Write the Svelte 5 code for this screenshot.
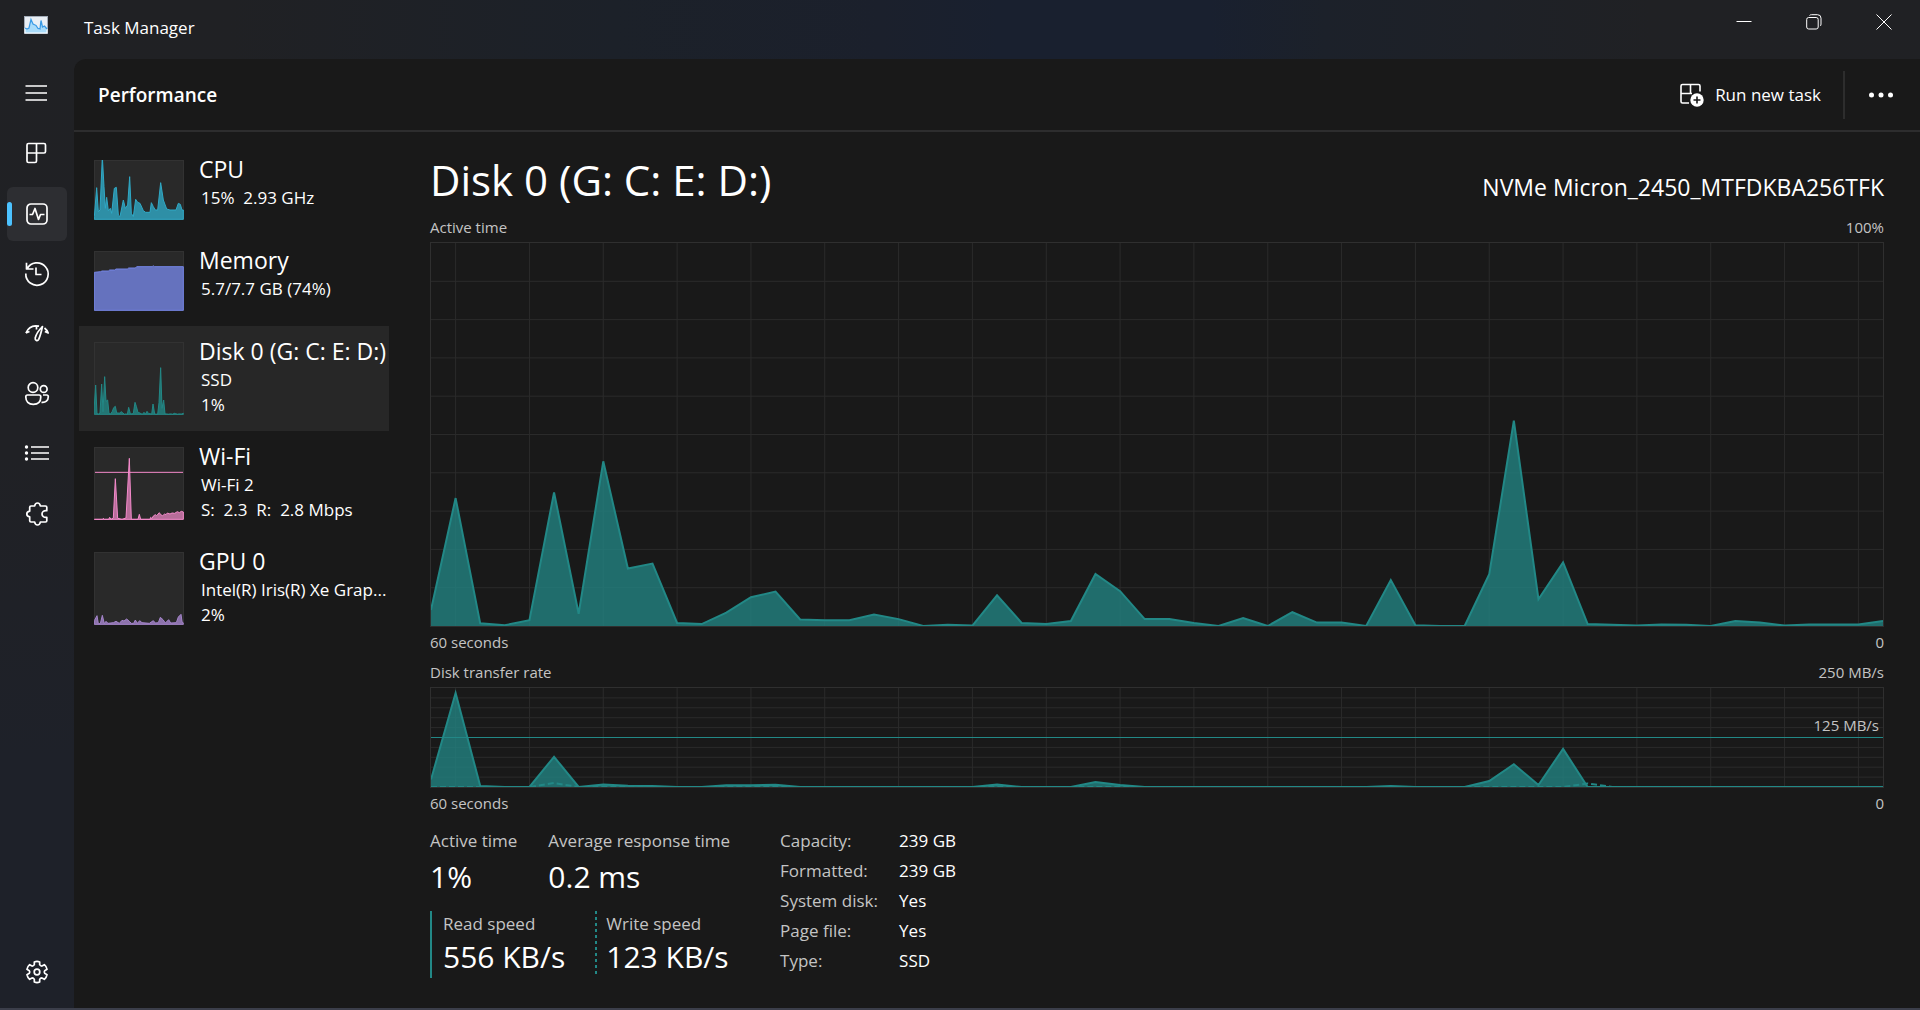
<script>
  const active = [
    4.2, 33.4, 0.7, 0.2, 1.5, 34.9, 3.2, 43, 15, 16.3, 0.8, 0.5, 3.5, 7.5, 9, 1.7, 1.5, 1.5, 3, 1.8,
    0, 0.3, 0.1, 8, 0.8, 0.5, 1.3, 13.6, 9.1, 1.8, 1.8, 0.8, 0, 2.1, 0, 3.6, 0.9, 0.9, 0, 12,
    0.2, 0, 0, 13.5, 53.6, 7, 16.6, 0.5, 0.3, 0.1, 0.4, 0.3, 0, 1.3, 0.9, 0.1, 0.4, 0.4, 0.4, 1.3
  ];

  const flat = (peaks) => Array.from({ length: 60 }, (_, i) => peaks[i] ?? 0);
  const read = flat({
    0: 7.5, 1: 95, 2: 1, 5: 30.5, 7: 2.5, 8: 1.3, 9: 1, 12: 1.7, 13: 1.7, 14: 2.3,
    23: 2.5, 27: 5, 28: 2, 39: 1, 43: 6, 44: 23, 45: 2, 46: 38.5
  });
  const write = flat({ 5: 4, 47: 3.5 });

  const line = (data) => data.map((v, i) => `${i},${100 - v}`).join(' ');
  const area = (data) => `0,100 ${line(data)} 59,100`;

  const columns = Array.from({ length: 20 }, (_, i) => 1 + i * 3);
  const rows = Array.from({ length: 9 }, (_, i) => (i + 1) * 10);

  const diskThumb = active.map((v, i) => `${Math.round((i * 268) / 59)},${Math.round(217 - v * 2.62)}`).join(' ');

  const resources = [
    {
      name: 'CPU', lines: ['15%  2.93 GHz'], kind: 'cpu', height: 180,
      points: '1,170 8,83 13,155 18,150 25,-10 30,80 34,145 38,112 43,152 49,145 53,160 61,85 67,82 73,165 78,170 88,120 94,145 101,135 107,50 112,160 118,170 125,118 131,127 138,130 148,152 155,157 168,157 172,128 178,140 184,150 191,150 200,68 208,120 218,147 228,150 246,150 253,130 259,133 264,150 268,150'
    },
    {
      name: 'Memory', lines: ['5.7/7.7 GB (74%)'], kind: 'memory', height: 180,
      points: '1,64 20,62 24,60 43,60 47,57 62,57 66,54 100,54 104,51 124,51 128,47 175,47 178,44 181,47 268,47'
    },
    { name: 'Disk 0 (G: C: E: D:)', lines: ['SSD', '1%'], kind: 'disk', height: 219, points: diskThumb, selected: true },
    {
      name: 'Wi-Fi', lines: ['Wi-Fi 2', 'S:  2.3  R:  2.8 Mbps'], kind: 'wifi', height: 219, limit: 76,
      points: '1,217 26,217 28,214 31,217 44,217 47,211 51,217 58,213 64,95 71,214 84,217 96,213 106,34 112,217 132,217 136,202 140,217 168,217 170,211 174,215 178,207 184,203 188,206 196,197 200,203 206,206 212,201 216,203 220,198 228,201 234,198 242,199 250,194 256,197 262,193 268,195'
    },
    {
      name: 'GPU 0', lines: ['Intel(R) Iris(R) Xe Grap...', '2%'], kind: 'gpu', height: 219,
      points: '1,206 9,191 13,215 19,215 25,190 31,215 36,208 42,214 58,212 66,208 76,214 84,205 90,207 98,201 106,208 112,214 119,214 124,204 130,214 137,206 144,212 166,214 178,206 184,213 193,212 199,196 207,203 214,213 224,203 230,213 247,212 253,195 261,187 264,208 268,214'
    }
  ];

  const specs = [
    ['Capacity:', '239 GB'],
    ['Formatted:', '239 GB'],
    ['System disk:', 'Yes'],
    ['Page file:', 'Yes'],
    ['Type:', 'SSD']
  ];

  const polar = (r, deg) => {
    const a = (deg * Math.PI) / 180;
    return `${(12 + r * Math.cos(a)).toFixed(2)} ${(12 + r * Math.sin(a)).toFixed(2)}`;
  };
  const gear =
    [0, 1, 2, 3, 4, 5]
      .map((k) => {
        const a = k * 60 - 90;
        return `${k ? 'L' : 'M'}${polar(7.8, a - 20)}L${polar(10.4, a - 15)}Q${polar(11, a)} ${polar(10.4, a + 15)}L${polar(7.8, a + 20)}Q${polar(6.8, a + 30)} ${polar(7.8, a + 40)}`;
      })
      .join('') + 'Z';
</script>

{#snippet grid()}
  {#each columns as x}<line class="grid" x1={x} x2={x} y1="0" y2="100" />{/each}
  {#each rows as y}<line class="grid" x1="0" x2="59" y1={y} y2={y} />{/each}
{/snippet}

<div class="window">
  <header class="titlebar">
    <svg class="logo" viewBox="0 0 24 18" aria-hidden="true">
      <rect x="0.5" y="0.5" width="23" height="17" fill="#e9eff5" stroke="#a3adb9" />
      <path d="M1 12L3 13L5 12L7 3.5L9 8L12 9.5L14 12.5L16 13L17 4.500L18.500 11L20.500 10L23 13V17H1Z" fill="#a9dcfa" />
      <path d="M1 12L3 13L5 12L7 3.5L9 8L12 9.5L14 12.5L16 13L17 4.500L18.500 11L20.500 10L23 13" fill="none" stroke="#3a9be6" stroke-width="1.300" />
    </svg>
    <span class="app-name">Task Manager</span>
    <div class="controls">
      <button aria-label="Minimize"><svg viewBox="0 0 16 16"><path d="M0.500 7.500H15.500" /></svg></button>
      <button aria-label="Restore">
        <svg viewBox="0 0 16 16"><rect x="0.700" y="3.500" width="11.500" height="11.500" rx="2" /><path d="M3.500 1.500Q4.200 0.700 5.500 0.700H11.500Q15 0.700 15 4.200V10Q15 11.500 14.200 12" /></svg>
      </button>
      <button aria-label="Close"><svg viewBox="0 0 16 16"><path d="M0.500 0.500L15.500 15.500M15.500 0.500L0.500 15.500" /></svg></button>
    </div>
  </header>

  <nav class="rail" aria-label="Pages">
    <button aria-label="Open navigation"><svg viewBox="0 0 24 24"><path d="M0.500 4H22M0.500 11H22M0.500 18H22" /></svg></button>
    <button aria-label="Processes">
      <svg viewBox="0 0 24 24"><path d="M3.500 1.500H19Q20.500 1.500 20.500 3V9.500Q20.500 11 19 11H11.500V19Q11.500 20.500 10 20.500H3.500Q2 20.500 2 19V3Q2 1.500 3.500 1.500ZM11.500 1.500V11M2 11H11.500" /></svg>
    </button>
    <button aria-label="Performance" class="current" aria-current="page">
      <svg viewBox="0 0 24 24"><rect x="2" y="2" width="20" height="20" rx="4" /><path d="M4.500 12.500H7.500L10 6.500L13.500 17.500L15.500 12.500H19.500" /></svg>
    </button>
    <button aria-label="App history">
      <svg viewBox="0 0 24 24"><path d="M1.500 0.800V7H8.500M2 7A11.200 11.200 0 1 1 0.800 11.500M11 5.500V12.500H16.500" /></svg>
    </button>
    <button aria-label="Startup apps">
      <svg viewBox="0 0 24 24"><path d="M0.900 11C3.500 5 8 2.800 14 4.200M0.900 11L4.500 9.500M11.500 3.700V7.500M17.500 4.500C14 8 11 12.500 10.200 16C9.800 18.500 12.500 19.500 13.700 17.300C15.200 14 16.500 9 17.500 4.500ZM19.500 6Q22 8 23.200 11L19.800 9.500" /></svg>
    </button>
    <button aria-label="Users">
      <svg viewBox="0 0 24 24"><circle cx="8" cy="5.500" r="4.800" /><circle cx="18.700" cy="7" r="3.400" /><path d="M2.500 13H14Q15.800 13 15.800 15C15.800 19.500 13 22.300 8.300 22.300C3.500 22.300 0.800 19.500 0.800 15Q0.800 13 2.500 13ZM18 13H21.700Q23.300 13 23.300 14.800C23.300 18.500 20.500 21 16.500 20.300" /></svg>
    </button>
    <button aria-label="Details">
      <svg viewBox="0 0 24 24"><path d="M6 5H24M6 11H24M6 17H24" /><path class="dots" d="M1.500 5h.01M1.500 11h.01M1.500 17h.01" /></svg>
    </button>
    <button aria-label="Services">
      <svg viewBox="0 0 24 24"><path d="M6 4H9.700C10 1.800 10.800 1 12.500 1C14.200 1 15 1.800 15.300 4H20.500Q21.800 4 21.800 5.300V8.700C18.800 8.300 17 9.800 17 12C17 14.200 18.800 15.700 21.800 15.300V18.700Q21.800 20 20.500 20H15.300C15 22.200 14.200 23 12.500 23C10.800 23 10 22.200 9.700 20H6Q4.700 20 4.700 18.700V14.800C2.700 14.500 1.800 13.500 1.800 12C1.800 10.500 2.700 9.500 4.700 9.200V5.300Q4.700 4 6 4Z" /></svg>
    </button>
    <button aria-label="Settings" class="settings">
      <svg viewBox="0 0 24 24"><path d={gear} /><circle cx="12" cy="12" r="2.800" /></svg>
    </button>
  </nav>

  <main class="page">
    <div class="toolbar">
      <h1>Performance</h1>
      <button class="run">
        <svg viewBox="0 0 24 24" aria-hidden="true">
          <path d="M20 8.500V3Q20 1.500 18.500 1.500H2.500Q1 1.500 1 3V18.500Q1 20 2.500 20H9M10.500 1.500V10.500H1M10.500 10.500H12" />
          <circle class="badge" cx="17" cy="17" r="6.700" />
          <path class="plus" d="M17 13.500V20.500M13.500 17H20.500" />
        </svg>
        Run new task
      </button>
      <button class="more" aria-label="More options">
        <svg viewBox="0 0 24 24"><circle cx="2.500" cy="12" r="2.500" /><circle cx="12" cy="12" r="2.500" /><circle cx="21.500" cy="12" r="2.500" /></svg>
      </button>
    </div>

    <div class="content">
      <div class="resources">
        {#each resources as r}
          <button class="resource {r.kind}" class:selected={r.selected} class:extended={r.lines.length > 1}>
            <svg class="thumb" viewBox="0 0 270 {r.height}" aria-hidden="true">
              <rect class="frame" x="1.500" y="1.500" width="267" height={r.height - 3} />
              <polygon points="1,{r.height - 2} {r.points} 268,{r.height - 2}" />
              {#if r.limit}<path d="M3 {r.limit}H267" />{/if}
            </svg>
            <span class="info">
              <span class="name">{r.name}</span>
              {#each r.lines as text}<span class="sub">{text}</span>{/each}
            </span>
          </button>
        {/each}
      </div>

      <section class="detail">
        <div class="heading">
          <h2>Disk 0 (G: C: E: D:)</h2>
          <span class="model">NVMe Micron_2450_MTFDKBA256TFK</span>
        </div>

        <div class="caption"><span>Active time</span><span>100%</span></div>
        <div class="chart large">
          <svg viewBox="0 0 59 100" preserveAspectRatio="none" role="img" aria-label="Active time">
            {@render grid()}
            <polygon class="area" points={area(active)} />
            <polyline class="trace" points={line(active)} />
          </svg>
        </div>
        <div class="caption"><span>60 seconds</span><span>0</span></div>

        <div class="caption"><span>Disk transfer rate</span><span>250 MB/s</span></div>
        <div class="chart small">
          <svg viewBox="0 0 59 100" preserveAspectRatio="none" role="img" aria-label="Disk transfer rate">
            {@render grid()}
            <line class="limit" x1="0" x2="59" y1="50" y2="50" />
            <polygon class="area" points={area(read)} />
            <polyline class="trace" points={line(read)} />
            <polyline class="trace dashed" points={line(write)} />
          </svg>
          <span class="limit-label">125 MB/s</span>
        </div>
        <div class="caption"><span>60 seconds</span><span>0</span></div>

        <div class="stats">
          <div class="live">
            <div class="pair">
              <div class="stat"><span class="label">Active time</span><span class="value">1%</span></div>
              <div class="stat"><span class="label">Average response time</span><span class="value">0.2 ms</span></div>
            </div>
            <div class="speeds">
              <div class="stat solid"><span class="label">Read speed</span><span class="value">556 KB/s</span></div>
              <div class="stat dotted"><span class="label">Write speed</span><span class="value">123 KB/s</span></div>
            </div>
          </div>
          <table>
            <tbody>
              {#each specs as [key, value]}
                <tr><th scope="row">{key}</th><td>{value}</td></tr>
              {/each}
            </tbody>
          </table>
        </div>
      </section>
    </div>
  </main>
</div>

<style>
  :global(body) {
    margin: 0;
    background: #202124;
  }

  .window {
    box-sizing: border-box;
    min-height: 100vh;
    display: grid;
    grid-template: 59px 1fr / 74px 1fr;
    border-bottom: 2px solid #3b3e4a;
    background:
      linear-gradient(90deg, transparent 12%, #1c2129 32%, #1b202c 46%, #19202f 52%, #19202f 63%, #1c212a 69%, transparent 86%) 0 0 / 100% 59px no-repeat,
      linear-gradient(180deg, #202124 0%, #202125 45%, #1e2129 75%, #1e2129 100%);
    color: #fff;
    font-family: 'Open Sans', 'Noto Sans', sans-serif;
    font-size: 17px;
  }

  button {
    border: 0;
    padding: 0;
    background: none;
    color: inherit;
    font: inherit;
    text-align: left;
  }

  svg {
    display: block;
    fill: none;
    stroke: #fff;
  }

  .titlebar {
    grid-column: 1 / 3;
    display: flex;
    align-items: flex-start;
  }

  .logo {
    width: 24px;
    height: 18px;
    margin: 16px 36px 0 24px;
  }

  .app-name {
    margin-top: 14px;
    line-height: 28px;
  }

  .controls {
    display: flex;
    margin-left: auto;
    padding-right: 1px;
  }

  .controls button {
    width: 70px;
    height: 43px;
    display: grid;
    place-items: center;
  }

  .controls svg {
    width: 16px;
    height: 16px;
  }

  .rail {
    display: flex;
    flex-direction: column;
    gap: 6px;
    padding: 8px 7px 7px;
  }

  .rail button {
    width: 60px;
    height: 54px;
    display: grid;
    place-items: center;
    border-radius: 6px;
  }

  .rail svg {
    width: 24px;
    height: 24px;
    overflow: visible;
    stroke-width: 1.7;
    stroke-linejoin: round;
  }

  .rail .dots {
    stroke-width: 3.4;
    stroke-linecap: round;
  }

  .rail .current {
    position: relative;
    background: #2d2e32;
  }

  .current::before {
    content: '';
    position: absolute;
    left: 0;
    top: 15px;
    bottom: 15px;
    width: 5px;
    border-radius: 3px;
    background: #4cc2ff;
  }

  .rail .settings {
    margin-top: auto;
    margin-bottom: 2px;
  }

  .page {
    min-width: 0;
    display: flex;
    flex-direction: column;
    border-top-left-radius: 12px;
    background: #191919;
  }

  .toolbar {
    height: 71px;
    display: flex;
    align-items: center;
    padding-right: 3px;
    border-bottom: 2px solid #2d2d2e;
  }

  h1 {
    margin: 0 auto 0 24px;
    font-size: 19px;
    line-height: 28px;
    font-weight: 600;
  }

  .run {
    height: 48px;
    display: flex;
    align-items: center;
    gap: 11px;
    padding-right: 22px;
    border-right: 2px solid #2d2d2d;
  }

  .run svg {
    width: 24px;
    height: 24px;
    stroke-width: 1.6;
  }

  .run .badge {
    fill: #fff;
    stroke: none;
  }

  .run .plus {
    stroke: #191919;
  }

  .more {
    width: 72px;
    height: 48px;
    display: grid;
    place-items: center;
  }

  .more svg {
    width: 24px;
    height: 24px;
    fill: #fff;
    stroke: none;
  }

  .content {
    flex: 1;
    display: flex;
  }

  .resources {
    width: 310px;
    flex: none;
    display: flex;
    flex-direction: column;
    padding: 12px 5px;
  }

  .resource {
    display: flex;
    align-items: flex-start;
    gap: 15px;
    padding: 0 0 15px 15px;
    --hue: #2fa9c6;
  }

  .extended {
    padding-bottom: 14px;
  }

  .selected {
    background: #272727;
  }

  .thumb {
    width: 90px;
    height: 60px;
    flex: none;
    margin-top: 16px;
    stroke: var(--hue);
    stroke-width: 3;
    overflow: hidden;
  }

  .extended .thumb {
    height: 73px;
  }

  .thumb .frame {
    fill: #292929;
    stroke: #323232;
  }

  .thumb polygon {
    fill: var(--hue);
    fill-opacity: 0.8;
  }

  .memory {
    --hue: #7484e4;
  }

  .disk {
    --hue: #228886;
  }

  .wifi {
    --hue: #f48acb;
  }

  .wifi polygon {
    fill-opacity: 0.7;
  }

  .gpu {
    --hue: #a585cc;
  }

  .info {
    min-width: 0;
    margin-top: 10px;
    display: flex;
    flex-direction: column;
    white-space: pre;
  }

  .name {
    font-size: 23px;
    line-height: 30px;
    margin-bottom: 1px;
  }

  .sub {
    padding-left: 2px;
    line-height: 25px;
  }

  .detail {
    flex: 1;
    min-width: 0;
    display: flex;
    flex-direction: column;
    padding: 0 36px 30px 36px;
  }

  .heading {
    height: 80px;
    display: flex;
    align-items: baseline;
    justify-content: space-between;
  }

  h2 {
    margin: 0;
    padding-top: 18px;
    font-size: 42px;
    line-height: 60px;
    font-weight: 400;
  }

  .model {
    font-size: 23px;
  }

  .caption {
    display: flex;
    justify-content: space-between;
    font-size: 15px;
    line-height: 30px;
    color: #c4c4c4;
  }

  .chart {
    position: relative;
    box-sizing: border-box;
    border: 1px solid #2f2f2f;
  }

  .large {
    flex: 1;
    min-height: 200px;
  }

  .small {
    height: 101px;
  }

  .chart svg {
    position: absolute;
    inset: 0;
    width: 100%;
    height: 100%;
  }

  .grid {
    stroke: #2b2b2b;
    shape-rendering: crispEdges;
    vector-effect: non-scaling-stroke;
  }

  .limit {
    stroke: #228886;
    shape-rendering: crispEdges;
    vector-effect: non-scaling-stroke;
  }

  .area {
    fill: #228886;
    fill-opacity: 0.76;
    stroke: none;
  }

  .trace {
    stroke: #228886;
    stroke-width: 2;
    vector-effect: non-scaling-stroke;
  }

  .dashed {
    stroke-dasharray: 6 3;
  }

  .limit-label {
    position: absolute;
    right: 4px;
    bottom: 50%;
    font-size: 15px;
    line-height: 25px;
    color: #c4c4c4;
  }

  .stats {
    display: flex;
    gap: 50px;
    padding-top: 8px;
  }

  .pair,
  .speeds {
    display: flex;
  }

  .pair {
    gap: 31px;
  }

  .speeds {
    gap: 30px;
    margin-top: 13px;
  }

  .stat {
    display: flex;
    flex-direction: column;
  }

  .label {
    font-size: 17px;
    line-height: 30px;
    color: #c4c4c4;
  }

  .value {
    font-size: 30px;
    line-height: 42px;
  }

  .speeds .stat {
    height: 67px;
    padding-left: 11px;
  }

  .speeds .label {
    line-height: 25px;
  }

  .solid {
    border-left: 2px solid #228886;
  }

  .dotted {
    background: repeating-linear-gradient(180deg, #228886 0 3px, transparent 3px 6px) 0 0 / 2px 63px no-repeat;
  }

  table {
    border-collapse: collapse;
    align-self: flex-start;
  }

  th,
  td {
    height: 30px;
    padding: 0;
    text-align: left;
    font-weight: 400;
    line-height: 30px;
  }

  th {
    width: 119px;
    color: #c4c4c4;
  }
</style>
